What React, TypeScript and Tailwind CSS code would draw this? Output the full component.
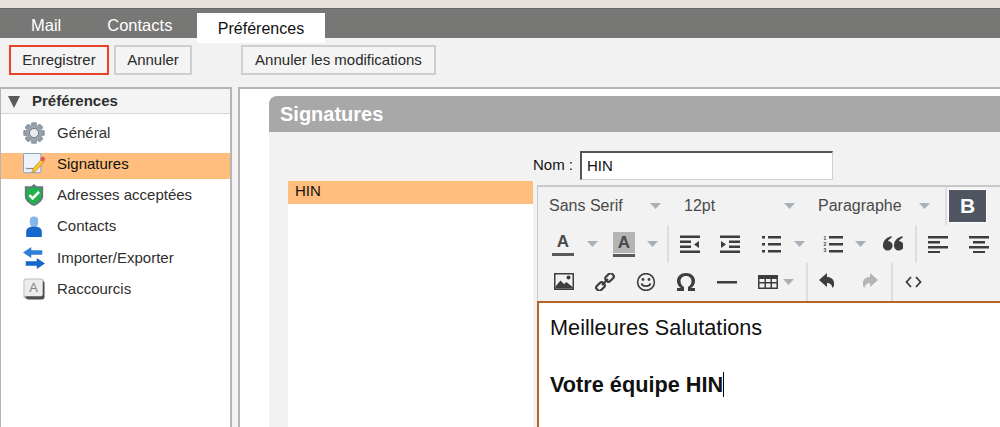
import { ReactNode } from "react"

const ink = "#3d3d3d"

const Sep = ({ className = "" }: { className?: string }) => (
  <div className={`w-[2px] shrink-0 self-stretch bg-[#dedede] ${className}`} />
)

const Caret = ({ className = "" }: { className?: string }) => (
  <svg width="11" height="6" viewBox="0 0 11 6" className={`shrink-0 ${className}`}>
    <path d="M0 0h11L5.5 6z" fill="#a9b1b8" />
  </svg>
)

const Icon = ({ w = 20, h = 18, className = "", children }: { w?: number; h?: number; className?: string; children: ReactNode }) => (
  <svg width={w} height={h} viewBox={`0 0 ${w} ${h}`} className={`shrink-0 ${className}`} fill={ink}>
    {children}
  </svg>
)

const Lines = ({ rows }: { rows: [number, number, number][] }) => (
  <>
    {rows.map(([x, y, w], i) => (
      <rect key={i} x={x} y={y} width={w} height="2.5" />
    ))}
  </>
)

const GearIcon = () => (
  <svg width="22" height="22" viewBox="0 0 24 24">
    <g fill="#8f9aa4">
      {[0, 45, 90, 135, 180, 225, 270, 315].map((a) => (
        <rect key={a} x="9" y="0.5" width="6" height="23" rx="1" transform={`rotate(${a} 12 12)`} />
      ))}
    </g>
    <circle cx="12" cy="12" r="8.5" fill="#98a3ac" />
    <circle cx="12" cy="12" r="5" fill="#e6eaed" stroke="#6b7782" strokeWidth="1" />
  </svg>
)

const SignIcon = () => (
  <svg width="22" height="22" viewBox="0 0 24 24">
    <rect x="0.5" y="0.5" width="19" height="21" rx="1" fill="#eef3fa" stroke="#7d9cc0" />
    <path d="M3 17c1-1.500 2 1 3 0s2 1 3 0 2 1 3 0" fill="none" stroke="#555" strokeWidth="1" />
    <path d="M11 17l9-10 3 2.800-9 10-4.500 1.500z" fill="#f4c430" stroke="#9a6a1a" strokeWidth="0.5" />
    <circle cx="21.500" cy="6.500" r="2.500" fill="#e2574c" />
  </svg>
)

const ShieldIcon = () => (
  <svg width="22" height="22" viewBox="0 0 24 24">
    <path d="M12 0l3 2.500h7V13c0 5-4.500 8.500-10 11C6.500 21.500 2 18 2 13V2.500h7z" fill="#66747c" />
    <path d="M12 2.500l2.500 2h5.500V13c0 4-3.500 7-8 9-4.500-2-8-5-8-9V4.500h5.500z" fill="#22b14c" />
    <path d="M7 12l3.500 3.800L17.500 8.500" fill="none" stroke="#fff" strokeWidth="2.8" />
  </svg>
)

const PersonIcon = () => (
  <svg width="22" height="22" viewBox="0 0 24 24">
    <rect x="7.500" y="0.500" width="9" height="11" rx="4" fill="#86b6ea" />
    <path d="M3.500 23v-6c0-3.500 3.500-5.500 8.500-5.500s8.500 2 8.500 5.500v6z" fill="#1667c9" />
  </svg>
)

const SwapIcon = () => (
  <svg width="22" height="22" viewBox="0 0 24 24">
    <path d="M9 0L0 6l9 6V8.500h12v-5H9z" fill="#2f7fd6" />
    <path d="M15 12l9 6-9 6v-3.500H3v-5h12z" fill="#1667c9" />
  </svg>
)

const KeyIcon = () => (
  <svg width="22" height="22" viewBox="0 0 24 24">
    <rect x="0.5" y="0.5" width="22" height="22" rx="3" fill="#bdbdbd" />
    <rect x="3" y="3" width="20.500" height="20.500" rx="3" fill="#4f4f4f" />
    <rect x="1.500" y="1.500" width="20" height="18.500" rx="2" fill="#ececec" />
    <text x="11.500" y="15" textAnchor="middle" fontSize="14" fill="#7f7f7f" className="font-['Liberation_Sans',sans-serif]">A</text>
  </svg>
)

const menu = [
  { label: "Général", icon: <GearIcon /> },
  { label: "Signatures", icon: <SignIcon />, active: true },
  { label: "Adresses acceptées", icon: <ShieldIcon /> },
  { label: "Contacts", icon: <PersonIcon /> },
  { label: "Importer/Exporter", icon: <SwapIcon /> },
  { label: "Raccourcis", icon: <KeyIcon /> },
]

const Button = ({ children, className = "" }: { children: ReactNode; className?: string }) => (
  <button className={`h-[30px] border-2 bg-[#f4f4f4] text-[15px] text-[#2a2a2a] ${className}`}>{children}</button>
)

const Sidebar = () => (
  <aside className="w-[232px] shrink-0 border-2 border-b-0 border-l-[1px] border-[#b5b5b5] bg-white">
    <div className="flex h-[25px] items-center border-b border-[#d5d5d5] bg-[#f4f4f4] pl-[6px]">
      <svg width="14" height="13" viewBox="0 0 14 13">
        <path d="M1 1h12L7 13z" fill="#5a5a5a" />
      </svg>
      <span className="ml-[11px] text-[15px] font-bold text-[#2f2f2f]">Préférences</span>
    </div>
    <ul className="flex flex-col gap-[5.2px] pt-[8px]">
      {menu.map((m) => (
        <li key={m.label} className={`flex h-[26px] items-center pb-[4px] pl-[22px] text-[15px] ${m.active ? "bg-[#ffbe7d] text-[#111]" : "text-[#2f2f2f]"}`}>
          {m.icon}
          <span className="ml-[12px]">{m.label}</span>
        </li>
      ))}
    </ul>
  </aside>
)

const EditorToolbar = () => (
  <div className="border-t-2 border-l border-[#c9c9c9] text-[16px] text-[#4a4a4a]">
    {/* formats */}
    <div className="flex h-[38px] items-center">
      <span className="ml-[11px] w-[101px] shrink-0">Sans Serif</span>
      <Caret />
      <span className="ml-[23px] w-[100px] shrink-0">12pt</span>
      <Caret />
      <span className="ml-[23px] w-[101px] shrink-0">Paragraphe</span>
      <Caret />
      <Sep className="ml-[15px]" />
      <div className="ml-[1px] flex h-[34px] w-[39px] shrink-0 items-center justify-center border border-white bg-[#4f5661] text-[21px] font-bold text-white">B</div>
    </div>
    {/* text tools */}
    <div className="flex h-[38px] items-center">
      <div className="ml-[17px] flex w-[16px] shrink-0 flex-col items-center">
        <span className="text-[17px] leading-[20px] font-bold text-[#4a4a4a]">A</span>
        <div className="mt-[1px] h-[3px] w-[22px] shrink-0 bg-[#5a5a5a]" />
      </div>
      <Caret className="ml-[16px]" />
      <div className="ml-[15px] flex w-[22px] shrink-0 flex-col items-center">
        <span className="h-[21px] w-[22px] bg-[#b4b4b4] text-center text-[17px] leading-[21px] font-bold text-[#4a4a4a]">A</span>
        <div className="mt-[1px] h-[3px] w-[22px] bg-[#5a5a5a]" />
      </div>
      <Caret className="ml-[12px]" />
      <Sep className="ml-[9px]" />
      <Icon className="ml-[11px]">
        <Lines rows={[[0, 0.5, 20], [0, 5.5, 11], [0, 10.5, 11], [0, 15.5, 20]]} />
        <path d="M19 6v7l-5-3.500z" />
      </Icon>
      <Icon className="ml-[20px]">
        <Lines rows={[[0, 0.5, 20], [9, 5.5, 11], [9, 10.5, 11], [0, 15.5, 20]]} />
        <path d="M1 6v7l5-3.500z" />
      </Icon>
      <Icon className="ml-[21px]">
        <Lines rows={[[7, 1, 13], [7, 8, 13], [7, 15, 13]]} />
        <rect x="1" y="1" width="3" height="2.5" />
        <rect x="1" y="8" width="3" height="2.5" />
        <rect x="1" y="15" width="3" height="2.5" />
      </Icon>
      <Caret className="ml-[13px]" />
      <Icon className="ml-[18px]">
        <Lines rows={[[6, 1, 14], [6, 8, 14], [6, 15, 14]]} />
        <text x="0.5" y="5" fontSize="5" fontWeight="700">1</text>
        <text x="0.5" y="11" fontSize="5" fontWeight="700">2</text>
        <text x="0.5" y="17" fontSize="5" fontWeight="700">3</text>
      </Icon>
      <Caret className="ml-[12px]" />
      <Icon className="ml-[17px]">
        <path d="M8.500 1C3.500 2.500 0 5.500 0 10.500a4.800 4.800 0 1 0 5-4.500c.5-1.500 2-2.500 3.500-3zM19.500 1c-5 1.500-8.500 4.500-8.500 9.500a4.800 4.800 0 1 0 5-4.500c.5-1.500 2-2.500 3.500-3z" />
      </Icon>
      <Sep className="ml-[12px]" />
      <Icon className="ml-[11px]">
        <Lines rows={[[0, 1, 20], [0, 6, 12], [0, 11, 20], [0, 16, 12]]} />
      </Icon>
      <Icon className="ml-[21px]">
        <Lines rows={[[0, 1, 20], [4, 6, 12], [0, 11, 20], [4, 16, 12]]} />
      </Icon>
    </div>
    {/* insert tools */}
    <div className="flex h-[38px] items-center">
      <Icon className="ml-[16px]">
        <path fillRule="evenodd" d="M0 0h20v17H0zM1.500 1.500v14h17v-14z" />
        <path d="M1.500 15.500v-2l5-6 3.500 3.500 2.500-2 6 5v1.500z" />
        <circle cx="14.5" cy="4.5" r="2" />
      </Icon>
      <Icon className="ml-[21px]">
        <g fill="none" stroke={ink} strokeWidth="2.2">
          <rect x="10" y="1.5" width="9" height="6" rx="2.5" transform="rotate(-45 14.500 4.500)" />
          <rect x="1" y="10.5" width="9" height="6" rx="2.5" transform="rotate(-45 5.500 13.500)" />
          <path d="M7 12l6-6" />
        </g>
      </Icon>
      <Icon className="ml-[21px]">
        <g fill="none" stroke={ink} strokeWidth="1.6">
          <circle cx="10" cy="9" r="8.4" />
          <path d="M5.500 10.500c1 3.500 8 3.500 9 0" strokeWidth="1.8" />
        </g>
        <circle cx="7" cy="6.5" r="1.4" />
        <circle cx="13" cy="6.5" r="1.4" />
      </Icon>
      <Icon className="ml-[20px]">
        <path d="M1 18v-3h4C2.500 13.500 1 11 1 8c0-4.700 3.800-8 9-8s9 3.300 9 8c0 3-1.500 5.500-4 7h4v3h-7v-4c2-1 3.500-3.200 3.500-6 0-3-2.300-5-5.500-5S4.500 5 4.500 8c0 2.800 1.500 5 3.500 6v4z" />
      </Icon>
      <Icon className="ml-[21px]">
        <rect x="0" y="8" width="20" height="2.5" />
      </Icon>
      <Icon className="ml-[21px]">
        <path fillRule="evenodd" d="M0 2h20v14H0zM1.500 6v3h5V6zm6.500 0v3h4.500V6zm6 0v3h4.500V6zM1.500 10.500v4h5v-4zm6.500 0v4h4.500v-4zm6 0v4h4.500v-4z" />
      </Icon>
      <Caret className="ml-[5px]" />
      <Sep className="ml-[12px]" />
      <Icon w={15} className="ml-[11px]">
        <path d="M8 0L0 7l8 7v-4c3 0 5 1.500 5.500 5l1.500-2V10C15 6.500 12 4 8 4z" />
      </Icon>
      <Icon w={15} className="ml-[29px]">
        <path d="M7 0l8 7-8 7v-4c-3 0-5 1.500-5.500 5L0 13V10C0 6.500 3 4 7 4z" fill="#b4b4b4" />
      </Icon>
      <Sep className="ml-[13px]" />
      <Icon w={17} className="ml-[12px]">
        <path d="M6 4L1.500 9 6 14M11 4l4.500 5-4.500 5" fill="none" stroke={ink} strokeWidth="1.8" />
      </Icon>
    </div>
  </div>
)

const App = () => {
  return (
    <div className="flex h-[427px] w-[1000px] flex-col overflow-hidden bg-[#f2f2f2] font-['Liberation_Sans',Arial,sans-serif]">
      <div className="h-[8px] shrink-0 bg-[#e6e1da]" />
      {/* tabs */}
      <nav className="relative flex h-[30px] shrink-0 items-start border-t border-[#666] bg-[#777775] text-[16.5px]">
        <span className="ml-[31px] mt-[4px] text-white">Mail</span>
        <span className="ml-[46px] mt-[4px] text-white">Contacts</span>
        <span className="absolute left-[197px] top-[4px] flex h-[30px] w-[128px] items-center justify-center bg-white pt-[1px] text-[16px] text-[#111]">Préférences</span>
      </nav>
      {/* actions */}
      <div className="flex h-[49px] shrink-0 items-center pb-[5px] pl-[9px]">
        <Button className="w-[100px] border-[#e8432a]">Enregistrer</Button>
        <Button className="ml-[5px] w-[78px] border-[#cfcfcf]">Annuler</Button>
        <Button className="ml-[49px] w-[195px] border-[#cfcfcf]">Annuler les modifications</Button>
      </div>
      <div className="flex min-h-0 flex-1">
        <Sidebar />
        <main className="ml-[6px] min-w-0 flex-1 border-t-2 border-l-2 border-[#b5b5b5] bg-white pl-[29px] pt-[7px]">
          <section className="flex h-full min-w-0 flex-col">
            <h2 className="flex h-[36px] shrink-0 items-center rounded-tl-[8px] bg-[#a8a8a8] pl-[11px] text-[20px] font-bold text-white">Signatures</h2>
            <div className="flex min-h-0 flex-1 bg-[#f2f2f2] pl-[19px]">
              <div className="mt-[49px] w-[245px] shrink-0 bg-white">
                <div className="flex h-[23px] items-center bg-[#ffbe7d] pb-[2px] pl-[7px] text-[15px] text-[#111]">HIN</div>
              </div>
              <div className="min-w-0 flex-1">
                <div className="mt-[19px] flex h-[29px] items-center text-[15px] text-[#111]">
                  <span className="w-[47px]">Nom :</span>
                  <div className="flex h-[29px] w-[253px] items-center border border-t-2 border-l-2 border-[#d0d0d0] border-t-[#555] border-l-[#555] bg-white pl-[5px]">HIN</div>
                </div>
                <div className="ml-[4px] mt-[5px] flex w-[600px] flex-col">
                  <EditorToolbar />
                  <div className="h-[200px] border-t-2 border-l-2 border-[#b5652a] bg-white pl-[11px] pt-[11px] text-[21.7px] leading-[28px] text-[#111]">
                    <p>Meilleures Salutations</p>
                    <p className="mt-[29px] font-bold">
                      <span className="border-r border-black">Votre équipe HIN</span>
                    </p>
                  </div>
                </div>
              </div>
            </div>
          </section>
        </main>
      </div>
    </div>
  )
}

export default App
